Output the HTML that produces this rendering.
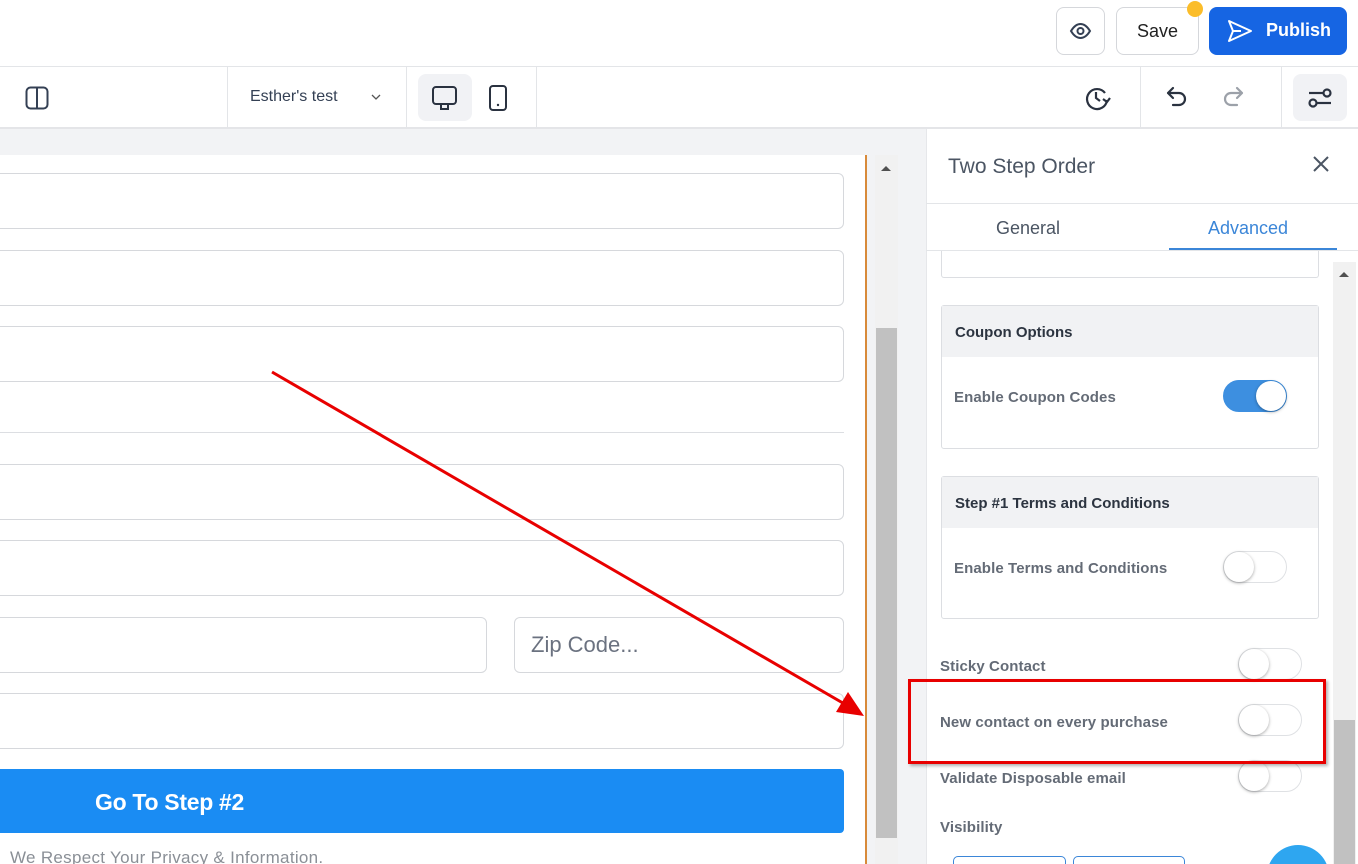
<!DOCTYPE html>
<html style="width:1358px;height:864px;overflow:hidden"><head><meta charset="utf-8"><style>
*{box-sizing:border-box;margin:0;padding:0}
body{width:1358px;height:864px;overflow:hidden;position:relative;background:#fff;font-family:"Liberation Sans",sans-serif;color:#344054}
.abs{position:absolute}
.inp{position:absolute;border:1px solid #d6d8dc;border-radius:6px;background:#fff}
.lbl{position:absolute;font-size:15px;color:#646b76;font-weight:bold;letter-spacing:0.1px}
.tog{position:absolute;width:64px;height:32px;border-radius:16px;border:1px solid #dfe1e4;background:#fff}
.tog::after{content:"";position:absolute;left:0;top:0;width:30px;height:30px;border-radius:50%;background:#fff;box-shadow:0 1px 3px rgba(0,0,0,.35)}
.tog.on{background:#3d8fe0;border-color:#3d8fe0}
.tog.on::after{left:32px}
.card{position:absolute;left:941px;width:378px;border:1px solid #dcdee2;border-radius:3px;background:#fff}
.card .hd{height:51px;background:#f1f2f4;font-size:15px;color:#2c3440;padding:18px 13px;font-weight:bold}
</style></head><body>
<div class="abs" style="left:0;top:66px;width:1358px;height:1px;background:#e3e5e8"></div>
<div class="abs" style="left:1056px;top:7px;width:49px;height:48px;border:1px solid #d5d7db;border-radius:8px">
<svg width="49" height="48" viewBox="0 0 49 48" style="position:absolute;left:-1px;top:-1px"><path d="M15 24c3-5 6-7 9.5-7s6.5 2 9.5 7c-3 5-6 7-9.5 7s-6.5-2-9.5-7z" fill="none" stroke="#344054" stroke-width="2"/><circle cx="24.5" cy="24" r="3" fill="none" stroke="#344054" stroke-width="2"/></svg></div>
<div class="abs" style="left:1116px;top:7px;width:83px;height:48px;border:1px solid #d5d7db;border-radius:8px;font-size:18px;text-align:center;line-height:46px;color:#222">Save</div>
<div class="abs" style="left:1187px;top:1px;width:16px;height:16px;border-radius:50%;background:#fbbd2a"></div>
<div class="abs" style="left:1209px;top:7px;width:138px;height:48px;border-radius:8px;background:#1665e3;color:#fff;font-weight:bold;font-size:18px;line-height:46px;padding-left:57px">Publish</div>
<svg class="abs" style="left:1226px;top:18px" width="28" height="26" viewBox="0 0 28 26"><path d="M3 3l22 10L3 23l4-10z M7 13h8" fill="none" stroke="#fff" stroke-width="2" stroke-linejoin="round"/></svg>
<div class="abs" style="left:0;top:127px;width:1358px;height:2px;background:#e4e5e8"></div>
<svg class="abs" style="left:25px;top:86px" width="24" height="24" viewBox="0 0 24 24"><rect x="1.5" y="1.5" width="21" height="21" rx="4" fill="none" stroke="#344054" stroke-width="2"/><path d="M12 2v20" stroke="#344054" stroke-width="2"/></svg>
<div class="abs" style="left:227px;top:67px;width:1px;height:61px;background:#e3e5e8"></div>
<div class="abs" style="left:250px;top:88px;font-size:16px;color:#344054">Esther's test</div>
<svg class="abs" style="left:370px;top:92px" width="12" height="10"><path d="M2 3l4 4 4-4" fill="none" stroke="#555" stroke-width="1.3"/></svg>
<div class="abs" style="left:406px;top:67px;width:1px;height:61px;background:#e3e5e8"></div>
<div class="abs" style="left:418px;top:74px;width:54px;height:47px;border-radius:8px;background:#f1f2f5"></div>
<svg class="abs" style="left:431px;top:85px" width="28" height="28" viewBox="0 0 28 28"><rect x="2" y="2" width="23" height="17" rx="3" fill="none" stroke="#2a3240" stroke-width="2"/><path d="M10 19v5h7v-5" fill="none" stroke="#2a3240" stroke-width="2"/></svg>
<svg class="abs" style="left:487px;top:84px" width="22" height="28" viewBox="0 0 22 28"><rect x="3" y="2" width="16" height="24" rx="3" fill="none" stroke="#2a3240" stroke-width="2"/><circle cx="11" cy="21" r="1.2" fill="#2a3240"/></svg>
<div class="abs" style="left:536px;top:67px;width:1px;height:61px;background:#e3e5e8"></div>
<svg class="abs" style="left:1083px;top:84px" width="28" height="28" viewBox="0 0 28 28"><path d="M22 9A10 10 0 1 0 24 16" fill="none" stroke="#2a3240" stroke-width="2.2"/><path d="M13 8v6l4 3" fill="none" stroke="#2a3240" stroke-width="2.2"/><path d="M20 15l4 3 3-4" fill="none" stroke="#2a3240" stroke-width="2.2"/></svg>
<div class="abs" style="left:1140px;top:67px;width:1px;height:61px;background:#e3e5e8"></div>
<svg class="abs" style="left:1165px;top:85px" width="26" height="24" viewBox="0 0 26 24"><path d="M8 3L3 8l5 5M3 8h11a6 6 0 0 1 0 12H8" fill="none" stroke="#2a3240" stroke-width="2.2" stroke-linecap="round" stroke-linejoin="round"/></svg>
<svg class="abs" style="left:1219px;top:85px" width="26" height="24" viewBox="0 0 26 24"><path d="M18 3l5 5-5 5M23 8H12a6 6 0 0 0 0 12h6" fill="none" stroke="#9ca1a9" stroke-width="2.2" stroke-linecap="round" stroke-linejoin="round"/></svg>
<div class="abs" style="left:1281px;top:67px;width:1px;height:61px;background:#e3e5e8"></div>
<div class="abs" style="left:1293px;top:74px;width:54px;height:47px;border-radius:8px;background:#f1f2f5"></div>
<svg class="abs" style="left:1306px;top:85px" width="28" height="26" viewBox="0 0 28 26"><circle cx="21" cy="8" r="3.5" fill="none" stroke="#2a3240" stroke-width="2.2"/><path d="M3 8h14" stroke="#2a3240" stroke-width="2.2"/><circle cx="7" cy="18" r="3.5" fill="none" stroke="#2a3240" stroke-width="2.2"/><path d="M11 18h14" stroke="#2a3240" stroke-width="2.2"/></svg>
<div class="abs" style="left:0;top:129px;width:926px;height:735px;background:#f2f3f5"></div>
<div class="abs" style="left:0;top:155px;width:866px;height:709px;background:#fff"></div>
<div class="abs" style="left:865px;top:155px;width:2px;height:709px;background:#d88a3a"></div>
<div class="abs" style="left:875px;top:155px;width:23px;height:709px;background:#f1f1f1"></div>
<div class="abs" style="left:876px;top:328px;width:21px;height:510px;background:#c1c1c1"></div>
<svg class="abs" style="left:880px;top:164px" width="12" height="8"><path d="M1 7L6 2l5 5z" fill="#505050"/></svg>
<div class="inp" style="left:-10px;top:173px;width:854px;height:56px"></div>
<div class="inp" style="left:-10px;top:250px;width:854px;height:56px"></div>
<div class="inp" style="left:-10px;top:326px;width:854px;height:56px"></div>
<div class="abs" style="left:0;top:432px;width:844px;height:1px;background:#dcdee2"></div>
<div class="inp" style="left:-10px;top:464px;width:854px;height:56px"></div>
<div class="inp" style="left:-10px;top:540px;width:854px;height:56px"></div>
<div class="inp" style="left:-10px;top:617px;width:497px;height:56px"></div>
<div class="inp" style="left:514px;top:617px;width:330px;height:56px;font-size:22px;color:#6b7280;padding:14px 16px">Zip Code...</div>
<div class="inp" style="left:-10px;top:693px;width:854px;height:56px"></div>
<div class="abs" style="left:0;top:769px;width:844px;height:64px;background:#1a8cf3;border-radius:0 4px 4px 0;color:#fff;font-weight:bold;font-size:23px;line-height:66px;padding-left:95px;letter-spacing:-0.3px">Go To Step #2</div>
<div class="abs" style="left:10px;top:848px;font-size:17px;color:#8a8f96;letter-spacing:0.3px">We Respect Your Privacy &amp; Information.</div>
<svg class="abs" style="left:0;top:0" width="900" height="864"><line x1="272" y1="372" x2="848" y2="706" stroke="#e80000" stroke-width="3"/><path d="M864 716L836 712L848 692z" fill="#e80000"/></svg>
<div class="abs" style="left:926px;top:129px;width:432px;height:735px;background:#fff;border-left:1px solid #e6e7ea"></div>
<div class="abs" style="left:948px;top:155px;font-size:21px;color:#4b5563">Two Step Order</div>
<svg class="abs" style="left:1312px;top:155px" width="18" height="18"><path d="M2 2l14 14M16 2L2 16" stroke="#4b5563" stroke-width="2"/></svg>
<div class="abs" style="left:926px;top:203px;width:432px;height:1px;background:#e3e5e8"></div>
<div class="abs" style="left:996px;top:218px;font-size:18px;color:#4b5563">General</div>
<div class="abs" style="left:1208px;top:218px;font-size:18px;color:#3b86d8">Advanced</div>
<div class="abs" style="left:1169px;top:248px;width:168px;height:2px;background:#3b86d8"></div>
<div class="abs" style="left:926px;top:250px;width:432px;height:1px;background:#e3e5e8"></div>
<div class="abs" style="left:941px;top:251px;width:378px;height:27px;border:1px solid #dcdee2;border-top:none;border-radius:0 0 3px 3px"></div>
<div class="abs" style="left:1333px;top:262px;width:23px;height:602px;background:#f1f1f1"></div>
<div class="abs" style="left:1334px;top:720px;width:21px;height:144px;background:#c1c1c1"></div>
<svg class="abs" style="left:1338px;top:270px" width="12" height="8"><path d="M1 7L6 2l5 5z" fill="#505050"/></svg>
<div class="card" style="top:305px;height:144px"><div class="hd">Coupon Options</div></div>
<div class="lbl" style="left:954px;top:389px">Enable Coupon Codes</div>
<div class="tog on" style="left:1223px;top:380px"></div>
<div class="card" style="top:476px;height:143px"><div class="hd">Step #1 Terms and Conditions</div></div>
<div class="lbl" style="left:954px;top:560px">Enable Terms and Conditions</div>
<div class="tog" style="left:1223px;top:551px"></div>
<div class="lbl" style="left:940px;top:658px">Sticky Contact</div>
<div class="tog" style="left:1238px;top:648px"></div>
<div class="lbl" style="left:940px;top:714px">New contact on every purchase</div>
<div class="tog" style="left:1238px;top:704px"></div>
<div class="lbl" style="left:940px;top:770px">Validate Disposable email</div>
<div class="tog" style="left:1238px;top:760px"></div>
<div class="lbl" style="left:940px;top:819px">Visibility</div>
<div class="abs" style="left:953px;top:856px;width:113px;height:20px;border:1px solid #3b86d8;border-radius:5px"></div>
<div class="abs" style="left:1073px;top:856px;width:112px;height:20px;border:1px solid #3b86d8;border-radius:5px"></div>
<div class="abs" style="left:1267px;top:845px;width:62px;height:62px;border-radius:50%;background:#2ea6f0"></div>
<div class="abs" style="left:908px;top:679px;width:418px;height:85px;border:3px solid #e80000;box-shadow:2px 2px 3px rgba(0,0,0,.3)"></div>
</body></html>
